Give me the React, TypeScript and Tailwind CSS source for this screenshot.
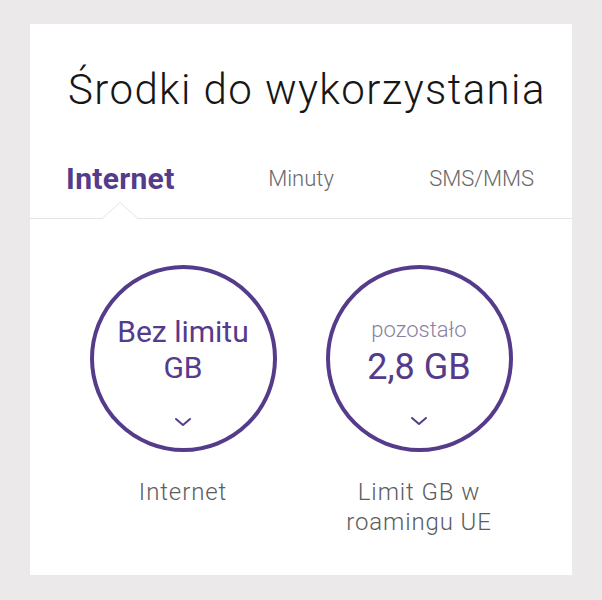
import { useState } from 'react';

type Tab = 'internet' | 'minuty' | 'sms';

const tabs: { id: Tab; label: string }[] = [
  { id: 'internet', label: 'Internet' },
  { id: 'minuty', label: 'Minuty' },
  { id: 'sms', label: 'SMS/MMS' },
];

function Chevron() {
  return (
    <svg width="18" height="10" viewBox="0 0 18 10" fill="none">
      <polyline
        points="2,2 9,8 16,2"
        stroke="#553c8b"
        strokeWidth="2"
        strokeLinecap="round"
        strokeLinejoin="round"
      />
    </svg>
  );
}

export default function App() {
  const [activeTab, setActiveTab] = useState<Tab>('internet');

  return (
    <div
      className="h-[600px] w-[602px] bg-[#ebe9ea] px-[30px] pt-[24px]"
      style={{ fontFamily: 'Roboto, "Noto Sans", sans-serif' }}
    >
      <div className="h-[551px] w-[542px] bg-white">
        {/* Title */}
        <h1 className="pl-[38px] pt-[45px] text-[42px] font-light leading-none tracking-[1.4px] text-[#161616]">
          Środki do wykorzystania
        </h1>

        {/* Tabs */}
        <div className="relative mt-[29px] grid h-[79px] grid-cols-3 border-b border-[#e4e4e4]">
          {tabs.map((t) => (
            <button
              key={t.id}
              onClick={() => setActiveTab(t.id)}
              className={`flex items-center justify-center leading-none ${
                activeTab === t.id
                  ? 'text-[30px] font-bold tracking-[0.3px] text-[#553c8b]'
                  : 'text-[22px] font-light text-[#6a6a6a]'
              }`}
            >
              {t.label}
            </button>
          ))}
          {/* Notch under active tab */}
          <svg
            className="absolute left-[72px] top-[62px]"
            width="36"
            height="18"
            viewBox="0 0 36 18"
          >
            <polygon points="0,17 18,0.5 36,17 36,18 0,18" fill="#ffffff" />
            <polyline points="0,16.5 18,0.5 36,16.5" fill="none" stroke="#e4e4e4" strokeWidth="1" />
          </svg>
        </div>

        {/* Circles */}
        <div className="grid grid-cols-2 px-[35px] pt-[46px]">
          <div className="flex flex-col items-center">
            <div className="flex h-[187px] w-[187px] flex-col items-center rounded-full border-[4px] border-[#553c8b] pt-[45px]">
              <div className="text-center text-[30px] leading-[36px] text-[#553c8b]">
                Bez limitu
                <br />
                GB
              </div>
              <div className="mt-[31px]">
                <Chevron />
              </div>
            </div>
            <p className="mt-[25px] text-center text-[24px] font-light leading-[30px] tracking-[0.9px] text-[#5c5c5c]">
              Internet
            </p>
          </div>

          <div className="flex flex-col items-center">
            <div className="flex h-[187px] w-[187px] flex-col items-center rounded-full border-[4px] border-[#553c8b] pt-[48px]">
              <div className="text-[22px] font-light leading-[26px] text-[#8a7fa3]">pozostało</div>
              <div className="mt-[4px] text-[36px] leading-[40px] text-[#553c8b]">2,8 GB</div>
              <div className="mt-[29px]">
                <Chevron />
              </div>
            </div>
            <p className="mt-[25px] text-center text-[24px] font-light leading-[30px] tracking-[0.9px] text-[#5c5c5c]">
              Limit GB w
              <br />
              roamingu UE
            </p>
          </div>
        </div>
      </div>
    </div>
  );
}
